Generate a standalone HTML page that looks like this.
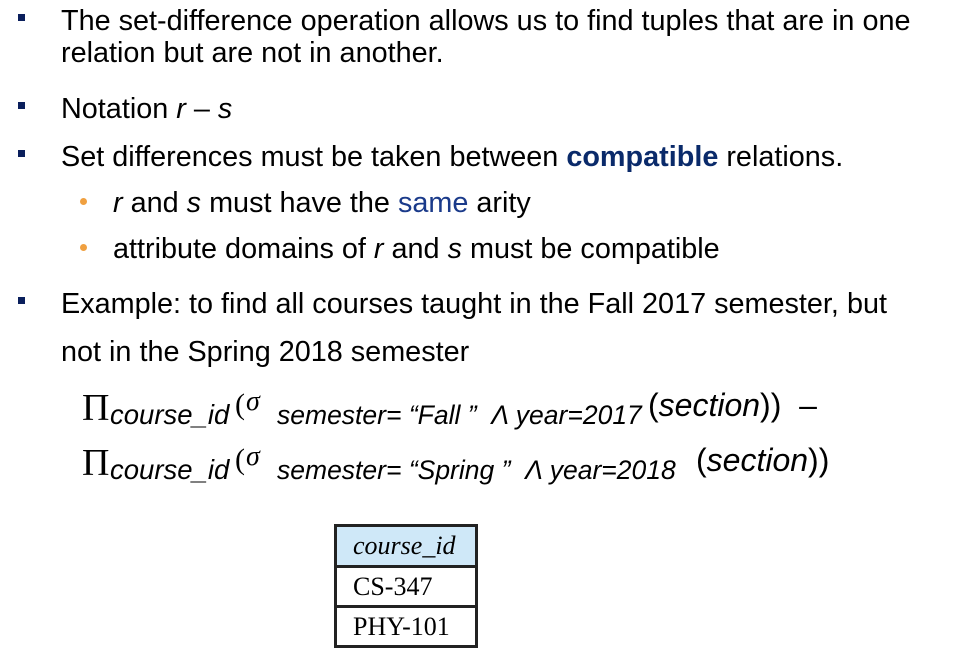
<!DOCTYPE html>
<html><head><meta charset="utf-8"><style>
body{margin:0;width:960px;height:657px;background:#fff;position:relative;overflow:hidden;font-family:"Liberation Sans",sans-serif;color:#000}
.t{position:absolute;font-size:28.8px;line-height:30px;white-space:nowrap}
.sq{position:absolute;width:7px;height:7px;background:#0a1f5c}
.dot{position:absolute;width:7px;height:7px;border-radius:50%;background:#f0a040}
.f{position:absolute;white-space:nowrap;font-style:italic;transform-origin:left top}
table{position:absolute;left:334px;top:524px;border-collapse:collapse;font-family:"Liberation Serif",serif;font-size:26px}
td{border:3px solid #222;width:141px;height:36px;padding:0 0 0 16px;box-sizing:border-box}
</style></head><body>
<div class="sq" style="left:18px;top:14px"></div>
<div class="t" style="left:61px;top:6px">The set-difference operation allows us to find tuples that are in one</div>
<div class="t" style="left:61px;top:38px">relation but are not in another.</div>
<div class="sq" style="left:18px;top:102px"></div>
<div class="t" style="left:61px;top:94px">Notation <i>r</i> – <i>s</i></div>
<div class="sq" style="left:18px;top:150px"></div>
<div class="t" style="left:61px;top:142px">Set differences must be taken between <b style="color:#0a2a6a">compatible</b> relations.</div>
<div class="dot" style="left:80px;top:198px"></div>
<div class="t" style="left:113px;top:188px"><i>r</i> and <i>s</i> must have the <span style="color:#1a3a8a">same</span> arity</div>
<div class="dot" style="left:80px;top:244px"></div>
<div class="t" style="left:113px;top:234px">attribute domains of <i>r</i> and <i>s</i> must be compatible</div>
<div class="sq" style="left:18px;top:297px"></div>
<div class="t" style="left:61px;top:289px">Example: to find all courses taught in the Fall 2017 semester, but</div>
<div class="t" style="left:61px;top:337px">not in the Spring 2018 semester</div>

<div class="f" style="left:82px;top:386px;font-family:'Liberation Serif',serif;font-style:normal;font-size:38px">Π</div>
<div class="f" style="left:110px;top:399px;font-size:27.5px">course_id</div>
<div class="f" style="left:235px;top:388px;font-style:normal;font-size:30px;font-family:'Liberation Serif',serif">(</div>
<div class="f" style="left:246px;top:386px;font-size:28px;font-family:'Liberation Serif',serif">σ</div>
<div class="f" style="left:277px;top:400px;font-size:26.5px">semester= “Fall ”&nbsp; Λ year=2017</div>
<div class="f" style="left:648px;top:387px;font-style:normal;font-size:32px">(<i>section</i>))&nbsp; –</div>

<div class="f" style="left:82px;top:441px;font-family:'Liberation Serif',serif;font-style:normal;font-size:38px">Π</div>
<div class="f" style="left:110px;top:454px;font-size:27.5px">course_id</div>
<div class="f" style="left:235px;top:443px;font-style:normal;font-size:30px;font-family:'Liberation Serif',serif">(</div>
<div class="f" style="left:246px;top:441px;font-size:28px;font-family:'Liberation Serif',serif">σ</div>
<div class="f" style="left:277px;top:455px;font-size:26.5px">semester= “Spring ”&nbsp; Λ year=2018</div>
<div class="f" style="left:696px;top:442px;font-style:normal;font-size:32px">(<i>section</i>))</div>

<table>
<tr><td style="background:#cfe8f8;font-style:italic;height:41px">course_id</td></tr>
<tr><td style="height:40px">CS-347</td></tr>
<tr><td style="height:40px">PHY-101</td></tr>
</table>
</body></html>
